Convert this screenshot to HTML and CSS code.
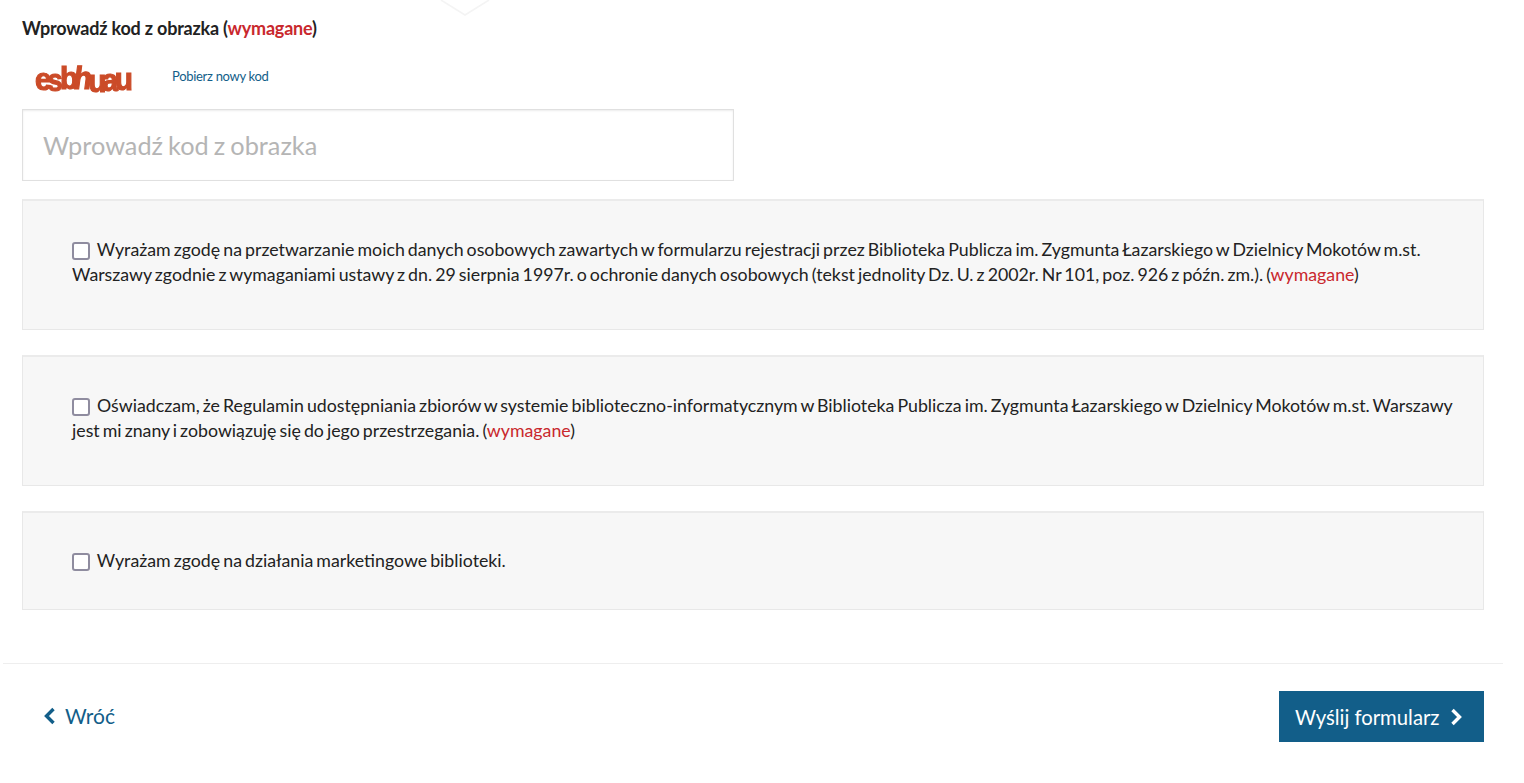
FILE: index.html
```html
<!DOCTYPE html>
<html lang="pl">
<head>
    <meta charset="UTF-8">
    <meta name="viewport" content="width=device-width, initial-scale=1.0">
    <title>Formularz rejestracji</title>
    <link rel="stylesheet" href="styles.css">
</head>
<body>
    <svg class="top-notch" width="60" height="18" viewBox="0 0 60 18">
        <path d="M6 0 L30 15 L54 0" fill="none" stroke="#f4f4f4" stroke-width="1.5"/>
    </svg>

    <div class="form-body">
        <label class="field-label" for="captcha">Wprowadź kod z obrazka (<span class="required">wymagane</span>)</label>

        <div class="captcha-row">
            <div class="captcha-box">
                <div class="captcha-image"><span class="c1">e</span><span class="c2">s</span><span class="c3">b</span><span class="c4">h</span><span class="c5">u</span><span class="c6">a</span><span class="c7">u</span></div>
            </div>
            <a class="new-code" href="#">Pobierz nowy kod</a>
        </div>

        <input class="text-input" id="captcha" type="text" placeholder="Wprowadź kod z obrazka">

        <div class="consent consent-first">
            <input class="check" type="checkbox">
            Wyrażam zgodę na przetwarzanie moich danych osobowych zawartych w formularzu rejestracji przez Biblioteka Publicza im. Zygmunta Łazarskiego w Dzielnicy Mokotów m.st. Warszawy zgodnie z wymaganiami ustawy z dn. 29 sierpnia 1997r. o ochronie danych osobowych (tekst jednolity Dz. U. z 2002r. Nr 101, poz. 926 z późn. zm.). (<span class="required">wymagane</span>)
        </div>

        <div class="consent">
            <input class="check" type="checkbox">
            Oświadczam, że Regulamin udostępniania zbiorów w systemie biblioteczno-informatycznym w Biblioteka Publicza im. Zygmunta Łazarskiego w Dzielnicy Mokotów m.st. Warszawy jest mi znany i zobowiązuję się do jego przestrzegania. (<span class="required">wymagane</span>)
        </div>

        <div class="consent consent-short">
            <input class="check" type="checkbox">
            Wyrażam zgodę na działania marketingowe biblioteki.
        </div>
    </div>

    <div class="form-footer">
        <a class="back-link" href="#">
            <svg width="12" height="18" viewBox="0 0 12 18"><path d="M9.5 2 L2.5 9 L9.5 16" fill="none" stroke="currentColor" stroke-width="3.4"/></svg>
            Wróć
        </a>
        <button class="submit-btn" type="button">
            Wyślij formularz
            <svg width="12" height="18" viewBox="0 0 12 18"><path d="M2.5 2 L9.5 9 L2.5 16" fill="none" stroke="currentColor" stroke-width="3.4"/></svg>
        </button>
    </div>
</body>
</html>
```

FILE: styles.css
```css
* {
    margin: 0;
    padding: 0;
    box-sizing: border-box;
}

body {
    font-family: Lato, "Open Sans", sans-serif;
    background: #fff;
    color: #222;
    width: 1506px;
    padding: 0 3px;
    position: relative;
}

.top-notch {
    position: absolute;
    top: 0;
    left: 435px;
}

.form-body {
    padding: 17px 19px 0;
}

.field-label {
    display: block;
    font-size: 18px;
    font-weight: 700;
    line-height: 22px;
    letter-spacing: -0.2px;
}

.required {
    color: #c9282d;
}

.captcha-row {
    display: flex;
    align-items: center;
    height: 50px;
    margin-top: 12px;
    margin-bottom: 8px;
}

.captcha-box {
    width: 150px;
    padding-left: 13px;
}

.captcha-image {
    font-family: "Liberation Sans", sans-serif;
    font-weight: 700;
    font-size: 32px;
    line-height: 34px;
    letter-spacing: -4.4px;
    color: #cb4b28;
    -webkit-text-stroke: 1.2px #cb4b28;
    filter: blur(0.7px);
    white-space: nowrap;
    margin-top: 5px;
    transform: scaleX(0.93);
    transform-origin: left center;
}

.captcha-image span {
    display: inline-block;
}

.c2 { transform: translateY(1px) scaleX(0.9); }
.c3 { transform: translateY(-1px); }
.c4 { transform: translateY(-1px) skewX(-8deg); }
.c5 { transform: translateY(2px); }
.c6 { transform: translateY(1px) scaleX(0.95); }

.new-code {
    font-size: 13px;
    letter-spacing: -0.3px;
    color: #125e89;
    text-decoration: none;
}

.text-input {
    display: block;
    width: 712px;
    height: 72px;
    padding: 0 20px;
    border: 1px solid #e0e0e0;
    box-shadow: inset 0 1px 2px rgba(0,0,0,0.08);
    font-family: inherit;
    font-size: 25.3px;
    word-spacing: -1.4px;
    color: #222;
    outline: none;
}

.text-input::placeholder {
    color: #b5b5b5;
    opacity: 1;
}

.consent {
    margin-top: 25px;
    padding: 36px 20px 42px 49px;
    background: #f7f7f7;
    border: 1px solid #e8e8e8;
    border-top: 2px solid #ebebeb;
    font-size: 17.75px;
    word-spacing: -1.5px;
    line-height: 25px;
    color: #222;
}

.consent-first {
    margin-top: 18px;
}

.consent-short {
    padding-top: 35px;
    padding-bottom: 36px;
}

.check {
    appearance: none;
    display: inline-block;
    width: 18px;
    height: 18px;
    margin-right: 4px;
    vertical-align: -4px;
    background: #fff;
    border: 2px solid #8f8c9f;
    border-radius: 3px;
}

.form-footer {
    display: flex;
    justify-content: space-between;
    align-items: center;
    margin-top: 53px;
    padding: 27px 19px 0;
    border-top: 1px solid #eee;
}

.back-link {
    display: flex;
    align-items: center;
    gap: 9px;
    padding-left: 22px;
    padding-bottom: 2px;
    font-size: 21px;
    color: #125e89;
    text-decoration: none;
}

.submit-btn {
    display: flex;
    align-items: center;
    gap: 10px;
    width: 205px;
    height: 51px;
    padding-left: 16px;
    background: #125e89;
    color: #fff;
    border: none;
    font-family: inherit;
    font-size: 20.3px;
    cursor: pointer;
}
```
